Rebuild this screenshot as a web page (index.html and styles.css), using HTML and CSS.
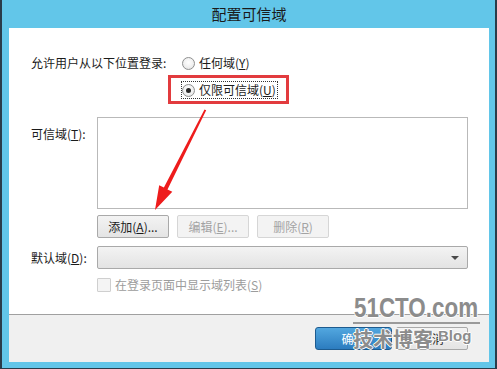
FILE: index.html
```html
<!DOCTYPE html>
<html lang="zh-CN">
<head>
<meta charset="utf-8">
<title>配置可信域</title>
<link rel="stylesheet" href="styles.css">
</head>
<body>
<div class="window">
  <div class="titlebar">配置可信域</div>
  <div class="client">
    <div class="content">
      <div class="row r1">
        <span class="label wide">允许用户从以下位置登录:</span>
        <span class="radio"><span class="circle"></span>任何域(<u>Y</u>)</span>
      </div>
      <div class="row r2">
        <span class="radio focus"><span class="circle checked"></span>仅限可信域(<u>U</u>)</span>
      </div>
      <div class="row r3">
        <span class="label top">可信域(<u>T</u>):</span>
        <div class="listbox"></div>
      </div>
      <div class="row r4">
        <span class="btn">添加(<u>A</u>)...</span>
        <span class="btn disabled">编辑(<u>E</u>)...</span>
        <span class="btn disabled">删除(<u>R</u>)</span>
      </div>
      <div class="row r5">
        <span class="label">默认域(<u>D</u>):</span>
        <div class="combo"><span class="arrow"></span></div>
      </div>
      <div class="row r6">
        <span class="check"></span>
        <span class="dtext">在登录页面中显示域列表(<u>S</u>)</span>
      </div>
    </div>
    <div class="footer">
      <span class="btn primary">确定</span>
      <span class="btn cancel">取消</span>
    </div>
  </div>
</div>

<div class="redbox"></div>
<svg class="arrowsvg" width="497" height="369" viewBox="0 0 497 369">
  <polygon fill="#ee1c1c" points="204.5,109.5 206.2,110.2 167.5,189.4 172.3,191.8 155,210 159.2,185.2 163.9,187.6"/>
</svg>

<div class="wm wm-logo">51CTO.com</div>
<div class="wm-line"></div>
<div class="wm wm-cn">技术博客</div>
<div class="wm wm-blog">Blog</div>
</body>
</html>
```

FILE: styles.css
```css
* { box-sizing: border-box; }
html, body { margin: 0; padding: 0; }
body {
  width: 497px;
  height: 369px;
  position: relative;
  overflow: hidden;
  font-family: "Noto Sans CJK SC", "Noto Sans", sans-serif;
  font-size: 12px;
  color: #1b1b1b;
  background: #60c4e8;
}
u { text-decoration: underline; text-underline-offset: 1px; }

.window {
  width: 497px;
  height: 369px;
  background: #62c6e9;
  border-left: 2px solid #2a3c4a;
  border-right: 2px solid #2a3c4a;
  border-bottom: 1px solid #2a3c4a;
  padding: 0 6px 6px 7px;
  display: flex;
  flex-direction: column;
}
.titlebar {
  height: 28px;
  line-height: 27px;
  text-align: center;
  font-size: 15px;
  color: #1a1a1a;
  padding-left: 0;
}
.client {
  flex: 1;
  display: flex;
  flex-direction: column;
}
.content {
  flex: 1;
  background: #ffffff;
  padding: 27px 21px 0 22px;
}
.row {
  display: flex;
  align-items: center;
  line-height: 16px;
}
.label { width: 66px; flex: none; white-space: nowrap; }
.label.wide { width: 151px; }
.label.top { align-self: flex-start; padding-top: 9px; }

.radio {
  display: inline-flex;
  align-items: center;
  height: 16px;
  white-space: nowrap;
}
.circle {
  width: 13px;
  height: 13px;
  border-radius: 50%;
  border: 1px solid #8e8f8f;
  background: radial-gradient(circle at 50% 40%, #ffffff 0%, #f0f0f0 55%, #dcdcdc 100%);
  margin-right: 4px;
  position: relative;
  flex: none;
}
.circle.checked::after {
  content: "";
  position: absolute;
  left: 3px;
  top: 3px;
  width: 5px;
  height: 5px;
  border-radius: 50%;
  background: #262626;
}
.focus {
  outline: 1px dotted #333;
  outline-offset: 0;
  padding-right: 1px;
}

.r2 { margin-top: 11px; padding-left: 151px; }
.r3 { margin-top: 19px; align-items: flex-start; }
.listbox {
  width: 371px;
  height: 92px;
  border: 1px solid #b9b9b9;
  background: #fff;
}
.r4 { margin-top: 6px; padding-left: 66px; gap: 8px; }
.btn {
  display: inline-flex;
  align-items: center;
  justify-content: center;
  width: 72px;
  height: 23px;
  border: 1px solid #a9a9a9;
  border-radius: 2px;
  background: linear-gradient(#f3f3f3, #e4e4e4);
  white-space: nowrap;
}
.btn.disabled {
  color: #a3a3a3;
  border-color: #d6d6d6;
  background: #f3f3f3;
}
.r5 { margin-top: 8px; }
.combo {
  width: 371px;
  height: 23px;
  border: 1px solid #a9a9a9;
  border-radius: 2px;
  background: linear-gradient(#f3f3f3, #e3e3e3);
  position: relative;
}
.arrow {
  position: absolute;
  right: 8px;
  top: 9px;
  width: 0;
  height: 0;
  border-left: 4px solid transparent;
  border-right: 4px solid transparent;
  border-top: 4px solid #4a4a4a;
}
.r6 { margin-top: 8px; padding-left: 66px; }
.check {
  width: 14px;
  height: 14px;
  border: 1px solid #cfcfcf;
  border-radius: 1px;
  background: #f4f4f4;
  margin-right: 4px;
  flex: none;
}
.dtext { color: #9c9c9c; white-space: nowrap; }

.footer {
  height: 48px;
  border-top: 1px solid #a0a0a0;
  background: #f0f0f0;
  display: flex;
  justify-content: flex-end;
  align-items: flex-start;
  gap: 4px;
  padding: 12px 21px 0 0;
}
.btn.primary {
  width: 77px;
  color: #fff;
  border: 1px solid #1d5b8f;
  border-radius: 3px;
  background: linear-gradient(#52a7df, #2c7cbf);
}
.btn.cancel { width: 72px; }

.redbox {
  position: absolute;
  left: 168px;
  top: 75px;
  width: 121px;
  height: 29px;
  border: 3px solid #e23b3e;
}
.arrowsvg {
  position: absolute;
  left: 0;
  top: 0;
  pointer-events: none;
}
.wm {
  position: absolute;
  color: #8c8c8c;
  font-weight: bold;
  white-space: nowrap;
  text-shadow: 1px 0 0 #fff, -1px 0 0 #fff, 0 1px 0 #fff, 0 -1px 0 #fff;
}
.wm-logo {
  left: 354px;
  top: 294px;
  font-family: "Liberation Sans", Arial, sans-serif;
  font-size: 28px;
  line-height: 28px;
  transform: scaleX(0.8);
  transform-origin: left top;
}
.wm-line {
  position: absolute;
  left: 353px;
  top: 322px;
  width: 127px;
  height: 2px;
  background: #9a9a9a;
}
.wm-cn {
  left: 353px;
  top: 329px;
  font-family: "Noto Sans CJK SC", sans-serif;
  font-size: 20px;
  line-height: 20px;
}
.wm-blog {
  left: 438px;
  top: 328px;
  font-family: "Liberation Sans", Arial, sans-serif;
  font-size: 15px;
  line-height: 15px;
}
```
